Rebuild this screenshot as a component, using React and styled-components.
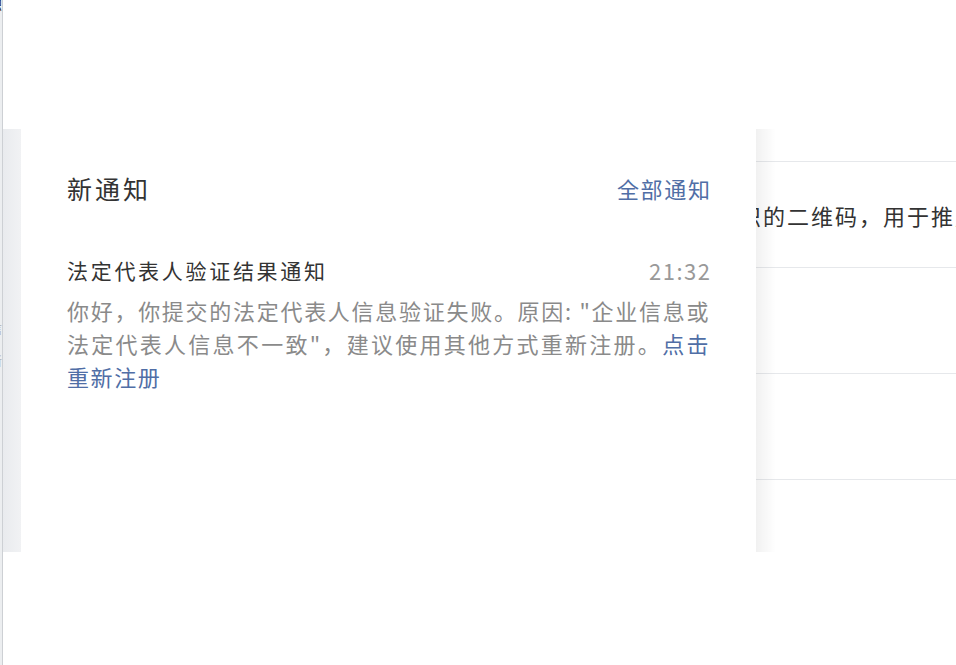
import React from 'react';
import styled, {createGlobalStyle} from "styled-components";

const GlobalStyle = createGlobalStyle`
    html, body {
        margin: 0;
        padding: 0;
        background: #fff;
    }
    body {
        font-family: "Noto Sans CJK SC", "Noto Sans", sans-serif;
        color: #333;
    }
`;

const Page = styled.div`
    display: flex;
    width: 956px;
    height: 665px;
    overflow: hidden;
`;

// clipped edge of the window behind, only its last pixels show
const LeftEdge = styled.div`
    width: 2px;
    flex-shrink: 0;
    background: #eceef0;
    border-right: 1px solid #cdd0d4;
    overflow: hidden;
    display: flex;
    flex-direction: column;
    align-items: flex-end;
`;

const EdgeGlyph = styled.span`
    flex-shrink: 0;
    white-space: nowrap;
    font-size: 12px;
    line-height: 12px;
    color: ${props => props.light ? '#b0b0b0' : '#222'};
    margin-top: ${props => props.top}px;
`;

const Main = styled.div`
    flex: 1;
    position: relative;
    overflow: hidden;
`;

const List = styled.div`
    margin-top: 161px;
`;

const ListRow = styled.div`
    height: 105px;
    border-top: 1px solid #e6e8eb;
    display: flex;
    align-items: center;
    padding-left: 616px;
`;

const RowText = styled.span`
    white-space: nowrap;
    font-size: 22px;
    letter-spacing: 2px;
    color: #333;
`;

const Overlay = styled.div`
    position: absolute;
    top: 129px;
    left: 0;
    height: 423px;
    display: flex;
`;

const LeftShade = styled.div`
    width: 18px;
    background: linear-gradient(to right, #e9ebee, #f1f2f4);
`;

const RightShade = styled.div`
    width: 20px;
    background: linear-gradient(to right, rgba(0, 0, 0, 0.055), rgba(0, 0, 0, 0));
`;

const Card = styled.div`
    width: 735px;
    box-sizing: border-box;
    background: #fff;
    padding: 44px 46px;
`;

const CardHeader = styled.div`
    height: 30px;
    display: flex;
    align-items: center;
    justify-content: space-between;
`;

const CardTitle = styled.span`
    font-size: 25px;
    letter-spacing: 3px;
    color: #333;
`;

const AllLink = styled.span`
    font-size: 22px;
    letter-spacing: 1.7px;
    margin-right: -1.7px;
    color: #506ea6;
`;

const NoticeHead = styled.div`
    margin-top: 52px;
    height: 30px;
    display: flex;
    align-items: center;
    justify-content: space-between;
`;

const NoticeTitle = styled.span`
    font-size: 21px;
    letter-spacing: 2.7px;
    color: #333;
`;

const NoticeTime = styled.span`
    font-size: 22px;
    letter-spacing: 1.5px;
    margin-right: -1.5px;
    color: #999;
`;

const NoticeBody = styled.p`
    margin: 9px 0 0;
    font-size: 22px;
    line-height: 33px;
    letter-spacing: 1.6px;
    text-align: justify;
    color: #8a8a8a;
`;

const BodyLink = styled.span`
    color: #506ea6;
`;

const App = () => {
    return(
        <>
            <GlobalStyle />
            <Page>
                <LeftEdge>
                    <EdgeGlyph top={-1}>识</EdgeGlyph>
                    <EdgeGlyph light top={312}>信</EdgeGlyph>
                    <EdgeGlyph light top={20}>新</EdgeGlyph>
                </LeftEdge>
                <Main>
                    <List>
                        <ListRow><RowText>门店专属标识的二维码，用于推广活动</RowText></ListRow>
                        <ListRow />
                        <ListRow />
                        <ListRow />
                    </List>
                    <Overlay>
                        <LeftShade />
                        <Card>
                            <CardHeader>
                                <CardTitle>新通知</CardTitle>
                                <AllLink>全部通知</AllLink>
                            </CardHeader>
                            <NoticeHead>
                                <NoticeTitle>法定代表人验证结果通知</NoticeTitle>
                                <NoticeTime>21:32</NoticeTime>
                            </NoticeHead>
                            <NoticeBody>
                                你好，你提交的法定代表人信息验证失败。原因: "企业信息或法定代表人信息不一致"，建议使用其他方式重新注册。<BodyLink>点击重新注册</BodyLink>
                            </NoticeBody>
                        </Card>
                        <RightShade />
                    </Overlay>
                </Main>
            </Page>
        </>
    );
};

export default App;
